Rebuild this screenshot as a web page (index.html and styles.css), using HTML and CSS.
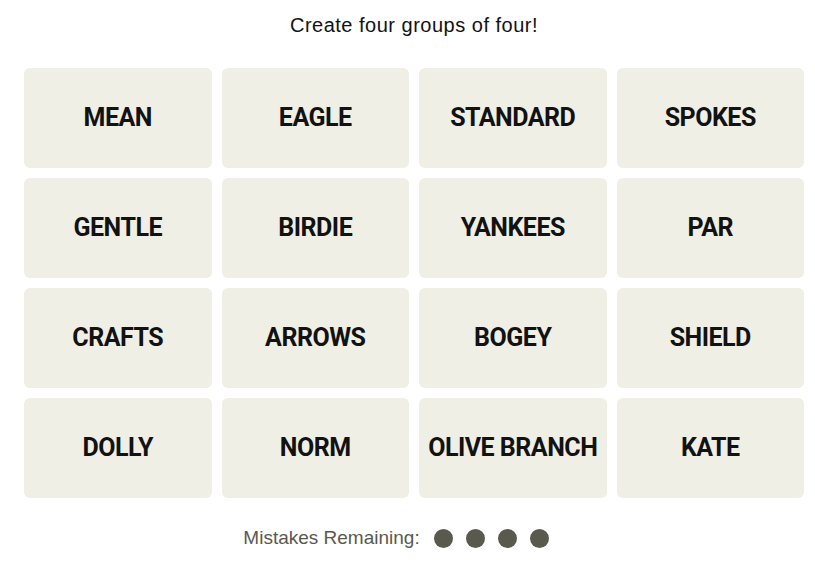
FILE: index.html
```html
<!DOCTYPE html>
<html>
<head>
<meta charset="utf-8">
<link rel="stylesheet" href="styles.css">
</head>
<body>
<main class="game">
  <p class="prompt">Create four groups of four!</p>
  <div class="board">
    <div class="tile">MEAN</div>
    <div class="tile">EAGLE</div>
    <div class="tile">STANDARD</div>
    <div class="tile">SPOKES</div>
    <div class="tile">GENTLE</div>
    <div class="tile">BIRDIE</div>
    <div class="tile">YANKEES</div>
    <div class="tile">PAR</div>
    <div class="tile">CRAFTS</div>
    <div class="tile">ARROWS</div>
    <div class="tile">BOGEY</div>
    <div class="tile">SHIELD</div>
    <div class="tile">DOLLY</div>
    <div class="tile">NORM</div>
    <div class="tile">OLIVE BRANCH</div>
    <div class="tile">KATE</div>
  </div>
  <div class="mistakes">
    <span class="label">Mistakes Remaining:</span>
    <span class="dots">
      <span class="dot"></span><span class="dot"></span><span class="dot"></span><span class="dot"></span>
    </span>
  </div>
</main>
</body>
</html>
```
FILE: styles.css
```css
html, body {
  margin: 0;
  padding: 0;
  background: #ffffff;
}
body {
  font-family: "Liberation Sans", Arial, sans-serif;
  color: #121212;
}
.game {
  width: 780px;
  padding: 0 0 0 24px;
}
.prompt {
  margin: 0;
  padding-top: 13px;
  height: 68px;
  box-sizing: border-box;
  text-align: center;
  font-size: 20px;
  letter-spacing: 0.5px;
  line-height: 24px;
}
.board {
  display: grid;
  grid-template-columns: repeat(4, 1fr);
  grid-auto-rows: 100px;
  gap: 10px;
}
.tile {
  background: #efefe6;
  border-radius: 6px;
  display: flex;
  align-items: center;
  justify-content: center;
  padding-bottom: 2px;
  box-sizing: border-box;
  font-family: Roboto, "Liberation Sans", sans-serif;
  font-weight: 700;
  font-size: 25px;
  letter-spacing: -0.5px;
  color: #121212;
}
.mistakes {
  display: flex;
  align-items: center;
  justify-content: center;
  margin-top: 29px;
  padding-right: 36px;
  gap: 14px;
  color: #5a594e;
  font-size: 19px;
}
.label {
  line-height: 22px;
}
.dots {
  display: flex;
  gap: 13px;
}
.dot {
  width: 19px;
  height: 19px;
  border-radius: 50%;
  background: #5a594e;
}
```
